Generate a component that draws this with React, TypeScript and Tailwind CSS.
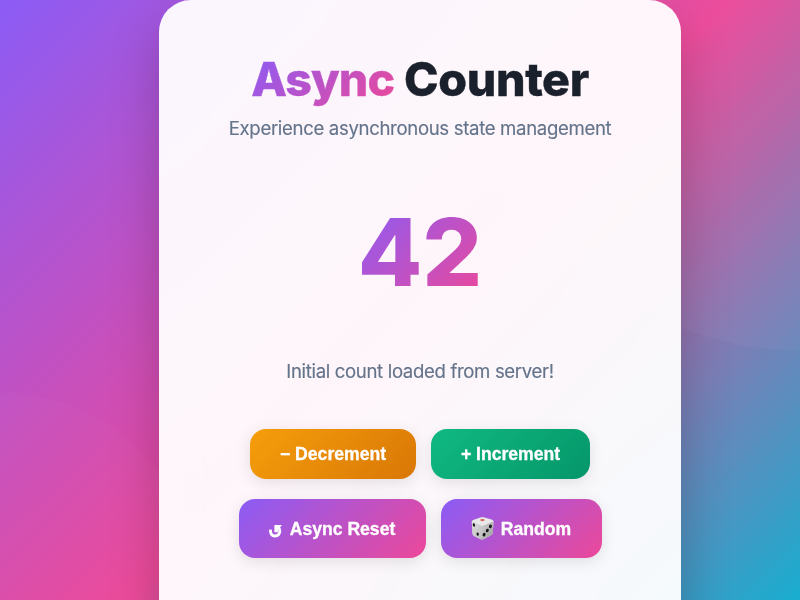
import React from "react";

function ResetIcon() {
  return (
    <svg width="13" height="14" viewBox="0 0 13 14" className="mt-[4px] mr-[8px] shrink-0" fill="none" aria-hidden="true">
      <path d="M1.6 5.6 C1 9.6 3 12 6 12 C9.2 12 11 9.6 10.8 6.8 C10.7 5.2 10 4 9 3.2" stroke="white" strokeWidth="2.9" />
      <path d="M5.4 1 H13 L11 3.4 L8.9 4 V8.2 H5.4 Z" fill="white" />
    </svg>
  );
}

function DieIcon() {
  return (
    <svg width="23" height="23" viewBox="0 0 23 23" className="mr-[7px] shrink-0" aria-hidden="true">
      <defs>
        <linearGradient id="dieLeft" x1="0" y1="0" x2="1" y2="1">
          <stop stopColor="#dededf" />
          <stop offset="1" stopColor="#bdbdbf" />
        </linearGradient>
        <linearGradient id="dieRight" x1="0" y1="0" x2="1" y2="1">
          <stop stopColor="#d2d2d2" />
          <stop offset="1" stopColor="#9c9c9e" />
        </linearGradient>
      </defs>
      <path d="M.7 4.8 Q1 3.5 2.5 3 L9 .7 Q11.5 0 14 .7 L20.8 2.7 Q22.6 3.3 22.6 5 L21.7 16 Q21.5 17.5 20.2 18.2 L13 22 Q11 23 9 22.1 L3 18.9 Q1.7 18.2 1.5 16.8 Z" fill="#ccc" />
      <path d="M.8 4.5 L11.2 8.8 L10.7 22.3 Q10 22.6 9 22.1 L3 18.9 Q1.7 18.2 1.5 16.8 Z" fill="url(#dieLeft)" />
      <path d="M11.2 8.8 L22.6 4.6 L21.7 16 Q21.5 17.5 20.2 18.2 L13 22 Q11.5 22.7 10.7 22.3 Z" fill="url(#dieRight)" />
      <path d="M1 4.2 Q1.4 3.4 2.5 3 L9 .7 Q11.5 0 14 .7 L20.8 2.7 Q22.2 3.2 22.5 4.3 L12.5 8.5 Q11.2 9 10 8.5 Z" fill="#e9e9e9" />
      <ellipse cx="11.4" cy="3.1" rx="2.2" ry="1.1" fill="#dd625b" />
      <g fill="#181818">
        <ellipse cx="2.9" cy="8" rx="1.15" ry="1.7" transform="rotate(-15 2.9 8)" />
        <ellipse cx="6.7" cy="17.1" rx="1.15" ry="1.7" transform="rotate(-15 6.7 17.1)" />
        <ellipse cx="19.4" cy="9.4" rx="1.45" ry="1.8" transform="rotate(25 19.4 9.4)" />
        <ellipse cx="16.3" cy="13.5" rx="1.45" ry="1.8" transform="rotate(25 16.3 13.5)" />
        <ellipse cx="13.1" cy="17.6" rx="1.45" ry="1.8" transform="rotate(25 13.1 17.6)" />
      </g>
    </svg>
  );
}

const buttonBase =
  "flex shrink-0 items-center justify-center rounded-2xl whitespace-nowrap font-['Liberation_Sans',Arial,sans-serif] text-[17.6px] font-bold leading-5 text-white [-webkit-text-stroke:0.3px_white] shadow-[0_4px_15px_rgba(0,0,0,0.1)]";

export default function App() {
  return (
    <div className="relative h-[600px] w-[800px] overflow-hidden bg-[linear-gradient(135deg,#8b5cf6_0%,#ec4899_50%,#06b6d4_100%)] bg-[length:800px_656px] bg-no-repeat font-[Inter,sans-serif]">
      <div className="absolute top-[-250px] left-[495px] size-[600px] rounded-full bg-white/[0.03]" />
      <div className="absolute top-[392px] left-[-202px] size-[400px] rounded-full bg-white/[0.02]" />
      <main className="relative ml-[159px] flex h-[656px] w-[522px] flex-col items-center rounded-[32px] bg-white/95 pt-[50px] shadow-[0_25px_50px_rgba(0,0,0,0.22)] backdrop-blur-[20px]">
        <h1 className="text-[46.5px] leading-[58px] font-extrabold tracking-[-0.35px] whitespace-nowrap text-[#1a202c] [-webkit-text-stroke:0.4px_#1a202c]">
          <span className="bg-[linear-gradient(135deg,#8b5cf6,#ec4899)] bg-clip-text tracking-[-0.9px] text-transparent [-webkit-text-stroke:0.4px_transparent]">Async</span> Counter
        </h1>
        <p className="mt-[6px] text-[18.6px] leading-7 tracking-[-0.34px] whitespace-nowrap text-[#64748b] [-webkit-text-stroke:0.15px_#64748b]">Experience asynchronous state management</p>
        <div className="mt-[62px] bg-[linear-gradient(135deg,#8b5cf6,#ec4899)] bg-clip-text text-[94px] leading-[96px] font-extrabold text-transparent">42</div>
        <p className="mt-[57px] text-[18.6px] leading-7 tracking-[-0.35px] whitespace-nowrap text-[#64748b] [-webkit-text-stroke:0.15px_#64748b]">Initial count loaded from server!</p>
        <div className="mt-[44px] flex gap-[15px]">
          <button className={buttonBase + " h-[50px] w-[166px] bg-[linear-gradient(135deg,#f59e0b,#d97706)]"}>− Decrement</button>
          <button className={buttonBase + " h-[50px] w-[159px] bg-[linear-gradient(135deg,#10b981,#059669)]"}>+ Increment</button>
        </div>
        <div className="mt-5 flex gap-[15px]">
          <button className={buttonBase + " h-[59px] w-[187px] bg-[linear-gradient(135deg,#8b5cf6,#ec4899)]"}><ResetIcon />Async Reset</button>
          <button className={buttonBase + " h-[59px] w-[161px] bg-[linear-gradient(135deg,#8b5cf6,#ec4899)]"}><DieIcon />Random</button>
        </div>
      </main>
    </div>
  );
}
